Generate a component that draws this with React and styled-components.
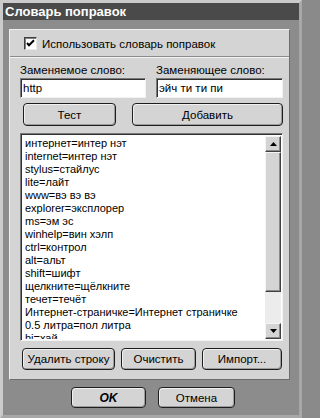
import styled, { createGlobalStyle } from 'styled-components'

const GlobalStyle = createGlobalStyle`
  html, body {
    margin: 0;
    padding: 0;
    background: #8a8a8a;
  }
  * {
    box-sizing: border-box;
  }
`

const Window = styled.div`
  width: 302px;
  height: 418px;
  background: #8c8c8c;
  border: 3px solid #cbcbcb;
  border-right-color: #a8a8a8;
  border-bottom-color: #a8a8a8;
  font-family: "Liberation Sans", Arial, sans-serif;
  font-size: 11px;
  color: #000;
  display: flex;
  flex-direction: column;
`

const TitleBar = styled.div`
  height: 17px;
  background: #4a4a4a;
  color: #fff;
  font-weight: bold;
  font-size: 13px;
  line-height: 17px;
  padding-left: 2px;
`

const Body = styled.div`
  padding: 9px 0 0 6px;
  display: flex;
  flex-direction: column;
`

const Panel = styled.div`
  width: 281px;
  height: 351px;
  background: #d4d4d4;
  border: 1px solid #efefef;
  border-right-color: #6e6e6e;
  border-bottom-color: #6e6e6e;
  display: flex;
  flex-direction: column;
`

const CheckRow = styled.label`
  display: flex;
  align-items: center;
  gap: 5px;
  height: 13px;
  margin: 7px 0 0 14px;
  font-size: 11.5px;
`

const CheckBox = styled.span`
  width: 13px;
  height: 13px;
  background: #fff;
  border: 1px solid #404040;
  border-right-color: #e8e8e8;
  border-bottom-color: #e8e8e8;
  box-shadow: inset 1px 1px #808080;
  display: flex;
  align-items: center;
  justify-content: center;
`

const Separator = styled.div`
  height: 2px;
  margin-top: 6px;
  border-top: 1px solid #8a8a8a;
  border-bottom: 1px solid #f4f4f4;
`

const FieldGrid = styled.div`
  display: grid;
  grid-template-columns: 126px 127px;
  column-gap: 10px;
  margin-left: 10px;
`

const Label = styled.div`
  height: 14px;
  line-height: 14px;
  margin-top: 5px;
  font-size: 11.5px;
`

const Input = styled.div`
  height: 20px;
  margin-top: 1px;
  background: #fff;
  border: 1px solid #7a7a7a;
  border-right-color: #f2f2f2;
  border-bottom-color: #f2f2f2;
  box-shadow: inset 1px 1px #303030;
  padding-left: 2px;
  line-height: 18px;
  font-size: 11.5px;
`

const ButtonRow = styled.div`
  display: flex;
  gap: ${p => p.$gap}px;
  margin-top: ${p => p.$top}px;
  margin-left: ${p => p.$left}px;
`

const Button = styled.div`
  width: ${p => p.$w}px;
  height: ${p => p.$h}px;
  border: 1px solid #1e1e1e;
  border-radius: 4px;
  background: #d4d4d4;
  box-shadow: inset 1px 1px #f0f0f0, inset -1px -1px #9c9c9c;
  display: flex;
  align-items: center;
  justify-content: center;
  font-size: ${p => (p.$strong ? 12 : 11.5)}px;
  font-weight: ${p => (p.$strong ? 'bold' : 'normal')};
  font-style: ${p => (p.$strong ? 'italic' : 'normal')};
`

const ListBox = styled.div`
  width: 263px;
  height: 208px;
  margin: 7px 0 0 10px;
  background: #fff;
  border: 1px solid #7a7a7a;
  border-right-color: #f2f2f2;
  border-bottom-color: #f2f2f2;
  box-shadow: inset 1px 1px #303030;
  padding: 2px 1px 1px 2px;
  display: flex;
  overflow: hidden;
`

const Items = styled.div`
  flex: 1;
  padding: 1px 0 0 2px;
  overflow: hidden;
`

const Item = styled.div`
  height: 13px;
  line-height: 13px;
  white-space: nowrap;
`

const ScrollBar = styled.div`
  width: 16px;
  display: flex;
  flex-direction: column;
  background: #ececec;
`

const ScrollPart = styled.div`
  height: ${p => (p.$h ? `${p.$h}px` : 'auto')};
  flex: ${p => (p.$h ? 'none' : '1')};
  background: #d4d4d4;
  border: 1px solid #f4f4f4;
  border-right-color: #404040;
  border-bottom-color: #404040;
  box-shadow: inset -1px -1px #8a8a8a;
  display: flex;
  align-items: center;
  justify-content: center;
`

const Track = styled.div`
  height: 31px;
  background: #ececec;
`

const BottomRow = styled.div`
  display: flex;
  gap: 12px;
  margin: 7px 0 0 62px;
`

const items = [
  'интернет=интер нэт',
  'internet=интер нэт',
  'stylus=стайлус',
  'lite=лайт',
  'www=вэ вэ вэ',
  'explorer=эксплорер',
  'ms=эм эс',
  'winhelp=вин хэлп',
  'ctrl=контрол',
  'alt=альт',
  'shift=шифт',
  'щелкните=щёлкните',
  'течет=течёт',
  'Интернет-страничке=Интернет страничке',
  '0.5 литра=пол литра',
  'hi=хай',
]

function Arrow({ down }) {
  return (
    <svg width="7" height="4" viewBox="0 0 7 4">
      <path d={down ? 'M0 0h7L3.5 4z' : 'M3.5 0L7 4H0z'} fill="#000" />
    </svg>
  )
}

export default function App() {
  return (
    <>
      <GlobalStyle />
      <Window>
        <TitleBar>Словарь поправок</TitleBar>
        <Body>
          <Panel>
            <CheckRow>
              <CheckBox>
                <svg width="9" height="9" viewBox="0 0 9 9">
                  <path d="M1 4l2 2.2L8 1.2" stroke="#000" strokeWidth="2" fill="none" />
                </svg>
              </CheckBox>
              Использовать словарь поправок
            </CheckRow>
            <Separator />
            <FieldGrid>
              <Label>Заменяемое слово:</Label>
              <Label>Заменяющее слово:</Label>
              <Input>http</Input>
              <Input>эйч ти ти пи</Input>
            </FieldGrid>
            <ButtonRow $gap={16} $top={5} $left={13}>
              <Button $w={93} $h={23}>Тест</Button>
              <Button $w={151} $h={23}>Добавить</Button>
            </ButtonRow>
            <ListBox>
              <Items>
                {items.map(item => (
                  <Item key={item}>{item}</Item>
                ))}
              </Items>
              <ScrollBar>
                <ScrollPart $h={16}><Arrow /></ScrollPart>
                <ScrollPart />
                <Track />
                <ScrollPart $h={16}><Arrow down /></ScrollPart>
              </ScrollBar>
            </ListBox>
            <ButtonRow $gap={6} $top={7} $left={12}>
              <Button $w={93} $h={22}>Удалить строку</Button>
              <Button $w={75} $h={22}>Очистить</Button>
              <Button $w={80} $h={22}>Импорт...</Button>
            </ButtonRow>
          </Panel>
          <BottomRow>
            <Button $w={75} $h={21} $strong>OK</Button>
            <Button $w={77} $h={21}>Отмена</Button>
          </BottomRow>
        </Body>
      </Window>
    </>
  )
}
